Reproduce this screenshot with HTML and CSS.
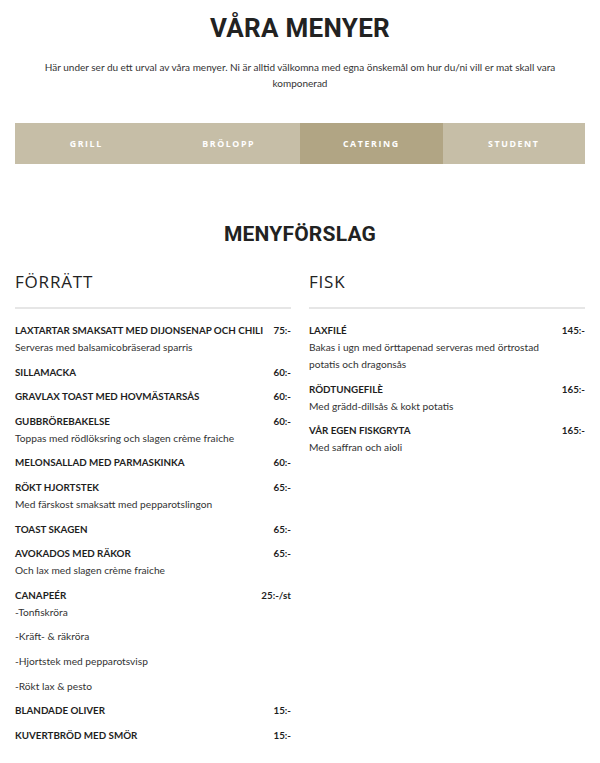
FILE: index.html
```html
<!DOCTYPE html>
<html lang="sv">
<head>
<meta charset="utf-8">
<title>Våra menyer</title>
<link rel="stylesheet" href="styles.css">
</head>
<body>
<main class="page">
  <header class="intro">
    <h1 class="title">VÅRA MENYER</h1>
    <p class="lead">Här under ser du ett urval av våra menyer. Ni är alltid välkomna med egna önskemål om hur du/ni vill er mat skall vara komponerad</p>
  </header>

  <nav class="tabs">
    <a class="tab">GRILL</a>
    <a class="tab">BRÖLOPP</a>
    <a class="tab active">CATERING</a>
    <a class="tab">STUDENT</a>
  </nav>

  <h2 class="section-title">MENYFÖRSLAG</h2>

  <div class="columns">
    <section class="col">
      <h3 class="col-title">FÖRRÄTT</h3>
      <div class="item"><div class="row"><span class="name">LAXTARTAR SMAKSATT MED DIJONSENAP OCH CHILI</span><span class="price">75:-</span></div><p class="desc">Serveras med balsamicobräserad sparris</p></div>
      <div class="item"><div class="row"><span class="name">SILLAMACKA</span><span class="price">60:-</span></div></div>
      <div class="item"><div class="row"><span class="name">GRAVLAX TOAST MED HOVMÄSTARSÅS</span><span class="price">60:-</span></div></div>
      <div class="item"><div class="row"><span class="name">GUBBRÖREBAKELSE</span><span class="price">60:-</span></div><p class="desc">Toppas med rödlöksring och slagen crème fraiche</p></div>
      <div class="item"><div class="row"><span class="name">MELONSALLAD MED PARMASKINKA</span><span class="price">60:-</span></div></div>
      <div class="item"><div class="row"><span class="name">RÖKT HJORTSTEK</span><span class="price">65:-</span></div><p class="desc">Med färskost smaksatt med pepparotslingon</p></div>
      <div class="item"><div class="row"><span class="name">TOAST SKAGEN</span><span class="price">65:-</span></div></div>
      <div class="item"><div class="row"><span class="name">AVOKADOS MED RÄKOR</span><span class="price">65:-</span></div><p class="desc">Och lax med slagen crème fraiche</p></div>
      <div class="item"><div class="row"><span class="name">CANAPEÉR</span><span class="price">25:-/st</span></div>
        <p class="desc">-Tonfiskröra</p>
        <p class="desc sub">-Kräft- &amp; räkröra</p>
        <p class="desc sub">-Hjortstek med pepparotsvisp</p>
        <p class="desc sub">-Rökt lax &amp; pesto</p>
      </div>
      <div class="item"><div class="row"><span class="name">BLANDADE OLIVER</span><span class="price">15:-</span></div></div>
      <div class="item"><div class="row"><span class="name">KUVERTBRÖD MED SMÖR</span><span class="price">15:-</span></div></div>
    </section>
    <section class="col">
      <h3 class="col-title">FISK</h3>
      <div class="item"><div class="row"><span class="name">LAXFILÉ</span><span class="price">145:-</span></div><p class="desc">Bakas i ugn med örttapenad serveras med örtrostad potatis och dragonsås</p></div>
      <div class="item"><div class="row"><span class="name">RÖDTUNGEFILÈ</span><span class="price">165:-</span></div><p class="desc">Med grädd-dillsås &amp; kokt potatis</p></div>
      <div class="item"><div class="row"><span class="name">VÅR EGEN FISKGRYTA</span><span class="price">165:-</span></div><p class="desc">Med saffran och aioli</p></div>
    </section>
  </div>
</main>
</body>
</html>
```

FILE: styles.css
```css
* { box-sizing: border-box; }
html, body { margin: 0; padding: 0; background: #fff; }
body { font-family: "Open Sans", "Liberation Sans", sans-serif; color: #222; }

.page { padding: 0 15px 20px; }

.intro { text-align: center; padding-top: 11px; }
.title {
  margin: 0;
  font-family: "Roboto", "Open Sans", sans-serif;
  font-size: 26px;
  line-height: 34px;
  font-weight: 700;
  letter-spacing: 0.3px;
  color: #222;
}
.lead {
  margin: 14px auto 0;
  width: 530px;
  font-family: "Lato", sans-serif;
  font-size: 10px;
  line-height: 16px;
  color: #333;
}

.tabs {
  margin-top: 32px;
  display: grid;
  grid-template-columns: repeat(4, 1fr);
  height: 41px;
  background: #c6bea7;
}
.tab {
  display: flex;
  align-items: center;
  justify-content: center;
  color: #fff;
  font-family: "Open Sans", sans-serif;
  font-weight: 700;
  font-size: 8.8px;
  letter-spacing: 1.6px;
}
.tab.active { background: #b1a584; }

.section-title {
  margin: 56px 0 0;
  text-align: center;
  font-family: "Roboto", "Open Sans", sans-serif;
  font-size: 21px;
  line-height: 28px;
  font-weight: 700;
  letter-spacing: 0.2px;
  color: #222;
}

.columns {
  margin-top: 22px;
  display: grid;
  grid-template-columns: minmax(0, 1fr) minmax(0, 1fr);
  column-gap: 18px;
}
.col-title {
  margin: 0;
  font-size: 17px;
  line-height: 24px;
  font-weight: 400;
  letter-spacing: 0.8px;
  color: #222;
  padding-bottom: 13px;
  border-bottom: 2px solid #e6e6e6;
  margin-bottom: 13px;
}

.item { margin-bottom: 7.6px; }
.row {
  display: flex;
  justify-content: space-between;
  align-items: baseline;
  gap: 8px;
}
.name, .price {
  font-family: "Lato", sans-serif;
  font-weight: 700;
  font-size: 9.8px;
  line-height: 17px;
  color: #1e1e1e;
}
.price { white-space: nowrap; }
.desc {
  margin: 0;
  max-width: 235px;
  font-family: "Lato", sans-serif;
  font-size: 10.2px;
  line-height: 17px;
  color: #333;
}
.desc.sub { margin-top: 7.6px; }
```
